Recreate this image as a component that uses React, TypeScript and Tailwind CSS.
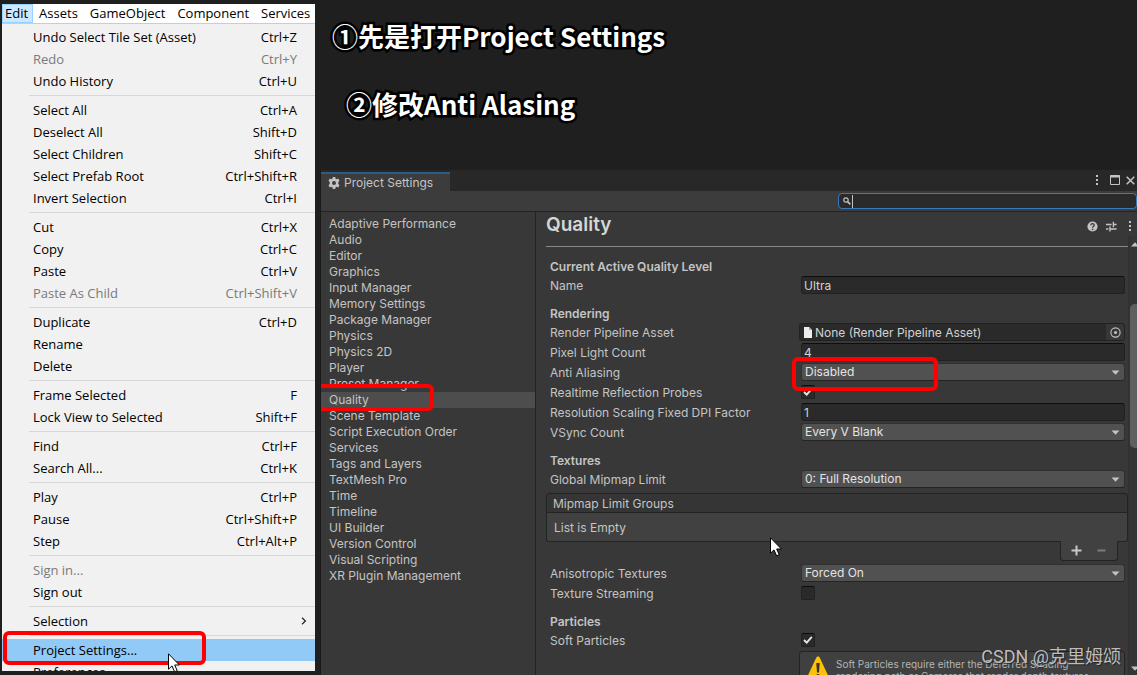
import React, { useId, useState } from 'react';

type MenuEntry = {
    label: string;
    shortcut?: string;
    disabled?: boolean;
    submenu?: boolean;
    active?: boolean;
};

const MENU_BAR = ['Assets', 'GameObject', 'Component', 'Services'];

const EDIT_MENU: MenuEntry[][] = [
    [
        { label: 'Undo Select Tile Set (Asset)', shortcut: 'Ctrl+Z' },
        { label: 'Redo', shortcut: 'Ctrl+Y', disabled: true },
        { label: 'Undo History', shortcut: 'Ctrl+U' },
    ],
    [
        { label: 'Select All', shortcut: 'Ctrl+A' },
        { label: 'Deselect All', shortcut: 'Shift+D' },
        { label: 'Select Children', shortcut: 'Shift+C' },
        { label: 'Select Prefab Root', shortcut: 'Ctrl+Shift+R' },
        { label: 'Invert Selection', shortcut: 'Ctrl+I' },
    ],
    [
        { label: 'Cut', shortcut: 'Ctrl+X' },
        { label: 'Copy', shortcut: 'Ctrl+C' },
        { label: 'Paste', shortcut: 'Ctrl+V' },
        { label: 'Paste As Child', shortcut: 'Ctrl+Shift+V', disabled: true },
    ],
    [
        { label: 'Duplicate', shortcut: 'Ctrl+D' },
        { label: 'Rename' },
        { label: 'Delete' },
    ],
    [
        { label: 'Frame Selected', shortcut: 'F' },
        { label: 'Lock View to Selected', shortcut: 'Shift+F' },
    ],
    [
        { label: 'Find', shortcut: 'Ctrl+F' },
        { label: 'Search All...', shortcut: 'Ctrl+K' },
    ],
    [
        { label: 'Play', shortcut: 'Ctrl+P' },
        { label: 'Pause', shortcut: 'Ctrl+Shift+P' },
        { label: 'Step', shortcut: 'Ctrl+Alt+P' },
    ],
    [
        { label: 'Sign in...', disabled: true },
        { label: 'Sign out' },
    ],
    [{ label: 'Selection', submenu: true }],
    [
        { label: 'Project Settings...', active: true },
        { label: 'Preferences...' },
    ],
];

const CATEGORIES = [
    'Adaptive Performance',
    'Audio',
    'Editor',
    'Graphics',
    'Input Manager',
    'Memory Settings',
    'Package Manager',
    'Physics',
    'Physics 2D',
    'Player',
    'Preset Manager',
    'Quality',
    'Scene Template',
    'Script Execution Order',
    'Services',
    'Tags and Layers',
    'TextMesh Pro',
    'Time',
    'Timeline',
    'UI Builder',
    'Version Control',
    'Visual Scripting',
    'XR Plugin Management',
];

const Cursor: React.FC<{ className: string }> = ({ className }) => (
    <svg className={className} width="12" height="20" viewBox="0 0 12 20" aria-hidden="true">
        <path d="M.5 .8V16.2L4 12.9L6.6 18.8L9.2 17.7L6.7 12H11.4Z" fill="#fff" stroke="#000" strokeWidth="1" />
    </svg>
);

const Dots: React.FC = () => (
    <svg width="4" height="12" viewBox="0 0 4 12" fill="#c4c4c4" aria-hidden="true">
        <rect x="1" y="1" width="2" height="2" />
        <rect x="1" y="5" width="2" height="2" />
        <rect x="1" y="9" width="2" height="2" />
    </svg>
);

const EditMenu: React.FC = () => (
    <div className="w-[313px] shrink-0 my-1 flex flex-col overflow-hidden bg-[#f1f1f1] text-black text-[13px] leading-[20px] font-['Open_Sans',sans-serif]">
        <div className="flex h-[19px] shrink-0 bg-white">
            <button className="h-[19px] pl-[2px] pr-1 border border-[#99d1ff] bg-[#cce8ff] leading-[17px]">Edit</button>
            {MENU_BAR.map(name => (
                <button key={name} className="h-[19px] px-[6px] leading-[19px]">{name}</button>
            ))}
        </div>
        <div className="border-t border-[#cccccc] pt-[2px]">
            {EDIT_MENU.map((group, i) => (
                <div key={i}>
                    {i > 0 && <div className="ml-[27px] my-[3px] h-px bg-[#d7d7d7]" />}
                    {group.map(item => (
                        <button
                            key={item.label}
                            disabled={item.disabled}
                            className={`relative flex w-full h-[22px] items-center justify-between pl-[31px] ${item.submenu ? 'pr-[8px]' : 'pr-[18px]'} ${item.disabled ? 'text-[#7a7a7a]' : ''} ${item.active ? 'bg-[#91c9f7]' : ''}`}
                        >
                            <span>{item.label}</span>
                            {item.shortcut && <span>{item.shortcut}</span>}
                            {item.submenu && (
                                <svg width="6" height="8" viewBox="0 0 6 8" fill="none" stroke="#222" strokeWidth="1.2" aria-hidden="true">
                                    <path d="M1 .8L4.4 4L1 7.2" />
                                </svg>
                            )}
                            {item.active && (
                                <>
                                    <span className="absolute left-[1px] -top-2 z-10 w-[203px] h-[34px] rounded-md border-4 border-[#ff0000]" />
                                    <Cursor className="absolute left-[166px] top-[14px] z-20" />
                                </>
                            )}
                        </button>
                    ))}
                </div>
            ))}
        </div>
    </div>
);

const SectionTitle: React.FC<{ children: React.ReactNode }> = ({ children }) => (
    <h2 className="mt-2 pl-1 h-[19px] leading-[19px] font-semibold">{children}</h2>
);

const Row: React.FC<{ label: string; id: string; children: React.ReactNode }> = ({ label, id, children }) => (
    <div className="flex h-5 pl-1 pr-[3px]">
        <label htmlFor={id} className="w-[251px] shrink-0 leading-[20px]">{label}</label>
        <div className="relative flex-1 min-w-0">{children}</div>
    </div>
);

const TextRow: React.FC<{ label: string; initial: string }> = ({ label, initial }) => {
    const id = useId();
    const [value, setValue] = useState(initial);
    return (
        <Row label={label} id={id}>
            <input
                id={id}
                type="text"
                value={value}
                onChange={e => setValue(e.target.value)}
                className="block w-full h-[18px] px-[2px] rounded-[3px] border border-[#212121] border-t-[#0d0d0d] bg-[#2a2a2a] text-[#d2d2d2] leading-[16px] outline-none"
            />
        </Row>
    );
};

const SelectRow: React.FC<{ label: string; options: string[]; marked?: boolean }> = ({ label, options, marked }) => {
    const id = useId();
    return (
        <Row label={label} id={id}>
            <select
                id={id}
                className="block w-full h-[18px] pl-[3px] pr-5 rounded-[3px] border border-[#303030] border-b-[#242424] bg-[#515151] text-[#e4e4e4] leading-[16px] appearance-none outline-none"
            >
                {options.map(o => <option key={o}>{o}</option>)}
            </select>
            <svg className="absolute right-[5px] top-[7px] pointer-events-none" width="9" height="5" viewBox="0 0 9 5" aria-hidden="true">
                <path d="M.5 .5H8.5L4.5 4.8Z" fill="#c4c4c4" />
            </svg>
            {marked && <span className="absolute -left-[9px] -top-[6px] z-10 w-[146px] h-[34px] rounded-md border-4 border-[#ff0000] pointer-events-none" />}
        </Row>
    );
};

const CheckRow: React.FC<{ label: string; initial?: boolean }> = ({ label, initial = false }) => {
    const id = useId();
    const [checked, setChecked] = useState(initial);
    return (
        <Row label={label} id={id}>
            <input
                id={id}
                type="checkbox"
                checked={checked}
                onChange={e => setChecked(e.target.checked)}
                className="block mt-[2px] size-[14px] rounded-[2px] border border-[#212121] border-t-[#0d0d0d] bg-[#2a2a2a] appearance-none"
            />
            {checked && (
                <svg className="absolute left-[2px] top-[4px] pointer-events-none" width="10" height="10" viewBox="0 0 10 10" fill="none" stroke="#e8e8e8" strokeWidth="1.8" aria-hidden="true">
                    <path d="M1 5L3.7 7.6L8.8 1.8" />
                </svg>
            )}
        </Row>
    );
};

const AssetRow: React.FC = () => {
    const id = useId();
    return (
        <Row label="Render Pipeline Asset" id={id}>
            <div className="-ml-[2px] flex h-[18px] items-center rounded-[3px] border border-[#212121] bg-[#2a2a2a] overflow-hidden">
                <svg className="ml-1 shrink-0" width="8" height="11" viewBox="0 0 8 11" aria-hidden="true">
                    <path d="M0 0H5L8 3V11H0Z" fill="#eeeeee" />
                    <path d="M5 0V3H8Z" fill="#a8a8a8" />
                </svg>
                <input id={id} readOnly value="None (Render Pipeline Asset)" className="flex-1 min-w-0 h-4 pt-px pl-[3px] text-[#d2d2d2] outline-none" />
                <button aria-label="Select asset" className="flex w-[18px] h-[16px] shrink-0 items-center justify-center bg-[#373737]">
                    <svg width="11" height="11" viewBox="0 0 11 11" fill="none" stroke="#c4c4c4" strokeWidth="1.1" aria-hidden="true">
                        <circle cx="5.5" cy="5.5" r="4.6" />
                        <circle cx="5.5" cy="5.5" r="1.5" fill="#c4c4c4" stroke="none" />
                    </svg>
                </button>
            </div>
        </Row>
    );
};

const MipmapGroups: React.FC = () => (
    <div className="mt-[3px] mb-[3px]">
        <div className="rounded-t-[3px] border border-[#232323] bg-[#353535] h-[20px] pl-[6px] leading-[20px]">Mipmap Limit Groups</div>
        <div className="rounded-b-[3px] border border-t-0 border-[#232323] bg-[#414141] h-[29px] pl-[7px] leading-[30px]">List is Empty</div>
        <div className="relative -mt-px ml-auto mr-[10px] flex w-[58px] h-5 items-center justify-around rounded-b-[3px] border border-t-0 border-[#232323] bg-[#414141] pl-[2px] pr-1">
            <button aria-label="Add group">
                <svg width="11" height="11" viewBox="0 0 11 11" fill="#c8c8c8" aria-hidden="true">
                    <path d="M4.5 .5H6.5V4.5H10.5V6.5H6.5V10.5H4.5V6.5H.5V4.5H4.5Z" />
                </svg>
            </button>
            <button aria-label="Remove group">
                <svg width="9" height="11" viewBox="0 0 9 11" fill="#7c7c7c" aria-hidden="true">
                    <rect x=".5" y="4.5" width="8" height="2" />
                </svg>
            </button>
        </div>
    </div>
);

const QualityPage: React.FC = () => (
    <main className="relative flex flex-1 min-w-0 flex-col">
        <div className="flex h-6 shrink-0 items-center pl-[10px] pr-[7px]">
            <h1 className="flex-1 pt-[2px] text-[19px] leading-[24px] font-semibold text-[#d6d6d6]">Quality</h1>
            <div className="flex items-center gap-2 pt-1">
                <button aria-label="Help">
                    <svg width="11" height="11" viewBox="0 0 11 11" aria-hidden="true">
                        <circle cx="5.5" cy="5.5" r="5.1" fill="#c4c4c4" />
                        <path d="M3.8 4.3C3.8 2.1 7.2 2.2 7.2 4.2C7.2 5.3 5.6 5.4 5.6 6.8" fill="none" stroke="#383838" strokeWidth="1.3" />
                        <rect x="4.9" y="7.7" width="1.4" height="1.4" fill="#383838" />
                    </svg>
                </button>
                <button aria-label="Presets">
                    <svg width="11" height="11" viewBox="0 0 11 11" fill="none" stroke="#c4c4c4" strokeWidth="1.4" aria-hidden="true">
                        <path d="M0 3.5H5.6M7.4 .8V6.2M7.4 3.5H10.6M0 8H2.4M4 5.5V10.6M4 8H10.6" />
                    </svg>
                </button>
                <button aria-label="More" className="ml-[3px] -mr-[2px]"><Dots /></button>
            </div>
        </div>
        <div className="flex flex-1 min-h-0">
            <div className="flex-1 min-w-0 overflow-hidden pl-[10px] pt-[10px]">
                <div className="h-px bg-[#8a8a8a] mb-[10px]" />
                <h2 className="pl-1 h-[19px] leading-[19px] font-semibold">Current Active Quality Level</h2>
                <TextRow label="Name" initial="Ultra" />

                <SectionTitle>Rendering</SectionTitle>
                <AssetRow />
                <TextRow label="Pixel Light Count" initial="4" />
                <SelectRow label="Anti Aliasing" options={['Disabled', '2x Multi Sampling', '4x Multi Sampling', '8x Multi Sampling']} marked />
                <CheckRow label="Realtime Reflection Probes" initial />
                <TextRow label="Resolution Scaling Fixed DPI Factor" initial="1" />
                <SelectRow label="VSync Count" options={['Every V Blank', 'Every Second V Blank', "Don't Sync"]} />

                <SectionTitle>Textures</SectionTitle>
                <SelectRow label="Global Mipmap Limit" options={['0: Full Resolution', '1: Half Resolution']} />
                <MipmapGroups />
                <SelectRow label="Anisotropic Textures" options={['Forced On', 'Per Texture', 'Disabled']} />
                <CheckRow label="Texture Streaming" />

                <SectionTitle>Particles</SectionTitle>
                <CheckRow label="Soft Particles" initial />
                <div className="ml-[253px] mr-[3px] flex h-10 rounded-[3px] border border-[#232323] bg-[#404040] pl-[7px] pt-1">
                    <svg className="shrink-0" width="22" height="24" viewBox="0 0 22 24" aria-hidden="true">
                        <path d="M11 .5C11.8 .5 12.4 1 12.8 1.7L21.6 20.6C22 22 21.4 23 20 23H2C.6 23 0 22 .4 20.6L9.2 1.7C9.6 1 10.2 .5 11 .5Z" fill="#ffc107" />
                        <path d="M9.3 7H12.7L12 16.5H10Z" fill="#333" />
                        <circle cx="11" cy="19.5" r="1.6" fill="#333" />
                    </svg>
                    <p className="ml-[7px] mt-[2px] w-[270px] text-[10px] leading-[12px] text-[#b5b5b5]">
                        Soft Particles require either the Deferred Shading rendering path or Cameras that render depth textures.
                    </p>
                </div>
            </div>
            <div className="flex w-[9px] shrink-0 flex-col items-center overflow-hidden border-l border-[#303030] bg-[#353535]">
                <svg className="mt-[6px] shrink-0 ml-[3px]" width="8" height="5" viewBox="0 0 8 5" aria-hidden="true">
                    <path d="M0 4.5L4 .3L8 4.5Z" fill="#c4c4c4" />
                </svg>
                <div className="mt-[57px] ml-px h-[144px] w-[7px] shrink-0 rounded-l-[5px] bg-[#5f5f5f]" />
                <svg className="mt-auto mb-[4px] shrink-0 ml-[3px]" width="8" height="5" viewBox="0 0 8 5" aria-hidden="true">
                    <path d="M0 .5H8L4 4.7Z" fill="#c4c4c4" />
                </svg>
            </div>
        </div>
        <Cursor className="absolute left-[234px] top-[325px] z-20" />
    </main>
);

const ProjectSettings: React.FC = () => {
    const [selected, setSelected] = useState('Quality');
    const [search, setSearch] = useState('');

    return (
        <section className="flex flex-1 min-h-0 flex-col overflow-hidden border-l border-[#191919] bg-[#383838] text-[#c4c4c4] text-[12px] font-['Inter',sans-serif]">
            <div className="flex h-[21px] shrink-0 items-end bg-[#282828]">
                <div className="flex w-[129px] h-[19px] items-center gap-1 border-t-2 border-[#2c5d87] bg-[#3c3c3c] pl-[7px] shadow-[0_1px_0_#3c3c3c]">
                    <svg width="12" height="12" viewBox="0 0 12 12" aria-hidden="true">
                        <path
                            fillRule="evenodd"
                            fill="#c4c4c4"
                            d="M4.8 0H7.2L7.6 1.7L8.6 2.2L10.2 1.6L11.5 3.7L10.3 5V7L11.5 8.3L10.2 10.4L8.6 9.8L7.6 10.3L7.2 12H4.8L4.4 10.3L3.4 9.8L1.8 10.4L.5 8.3L1.7 7V5L.5 3.7L1.8 1.6L3.4 2.2L4.4 1.7ZM6 4A2 2 0 1 0 6 8A2 2 0 1 0 6 4Z"
                        />
                    </svg>
                    <span className="leading-[16px] whitespace-nowrap">Project Settings</span>
                </div>
                <div className="ml-auto flex h-[21px] items-center gap-2 pb-px">
                    <button aria-label="Window menu"><Dots /></button>
                    <button aria-label="Maximize" className="ml-[3px]">
                        <svg width="10" height="10" viewBox="0 0 10 10" fill="none" stroke="#c4c4c4" aria-hidden="true">
                            <path d="M.5 .5H9.5V9.5H.5Z" />
                            <path d="M0 1.5H10" strokeWidth="2" />
                        </svg>
                    </button>
                    <button aria-label="Close" className="-ml-[2px] mr-[2px]">
                        <svg width="9" height="9" viewBox="0 0 9 9" fill="none" stroke="#c4c4c4" strokeWidth="1.5" aria-hidden="true">
                            <path d="M.7 .7L8.3 8.3M8.3 .7L.7 8.3" />
                        </svg>
                    </button>
                </div>
            </div>
            <div className="flex h-[21px] shrink-0 justify-end border-b border-[#232323] bg-[#3c3c3c] pt-[2px]">
                <div className="flex w-[299px] h-4 items-center rounded-[4px] border border-[#3a79bb] bg-[#2a2a2a] pl-1">
                    <svg width="8" height="8" viewBox="0 0 8 8" fill="none" stroke="#c4c4c4" strokeWidth="1.2" aria-hidden="true">
                        <circle cx="3" cy="3" r="2.2" />
                        <path d="M4.6 4.6L7.4 7.4" strokeWidth="1.5" />
                    </svg>
                    <span className="ml-px h-[13px] w-px bg-[#c4c4c4]" />
                    <input
                        type="search"
                        aria-label="Search settings"
                        value={search}
                        onChange={e => setSearch(e.target.value)}
                        className="flex-1 min-w-0 h-[14px] outline-none"
                    />
                </div>
            </div>
            <div className="flex flex-1 min-h-0">
                <nav className="flex w-[215px] shrink-0 flex-col border-r border-[#232323] pt-1">
                    {CATEGORIES.map(name => (
                        <button
                            key={name}
                            onClick={() => setSelected(name)}
                            className={`relative h-4 shrink-0 pl-2 text-left leading-[16px] ${name === selected ? 'bg-[#4d4d4d]' : ''}`}
                        >
                            {name}
                            {name === 'Quality' && (
                                <span className="absolute -left-[5px] -top-2 z-10 w-[118px] h-[27px] rounded-md border-4 border-[#ff0000]" />
                            )}
                        </button>
                    ))}
                </nav>
                <QualityPage />
            </div>
        </section>
    );
};

const App: React.FC = () => (
    <div className="relative flex h-screen overflow-hidden bg-[#1f1f1f] pl-[2px]">
        <EditMenu />
        <div className="ml-[5px] flex flex-1 min-w-0 flex-col">
            <header className="flex h-[170px] shrink-0 flex-col gap-7 pl-3 pt-4 text-[26px] leading-[40px] font-bold text-white font-['Noto_Sans_CJK_SC',sans-serif] [-webkit-text-stroke:5px_#000] [paint-order:stroke_fill] [stroke-linejoin:round]">
                <p>①先是打开Project Settings</p>
                <p className="pl-[14px]">②修改Anti Alasing</p>
            </header>
            <ProjectSettings />
        </div>
        <span className="absolute right-4 bottom-1 z-30 text-[18px] leading-[28px] text-[#bcbcbc] [text-shadow:1px_1px_1px_#222] font-['Roboto','Noto_Sans_CJK_SC',sans-serif] pointer-events-none">
            CSDN @克里姆颂
        </span>
    </div>
);

export default App;
